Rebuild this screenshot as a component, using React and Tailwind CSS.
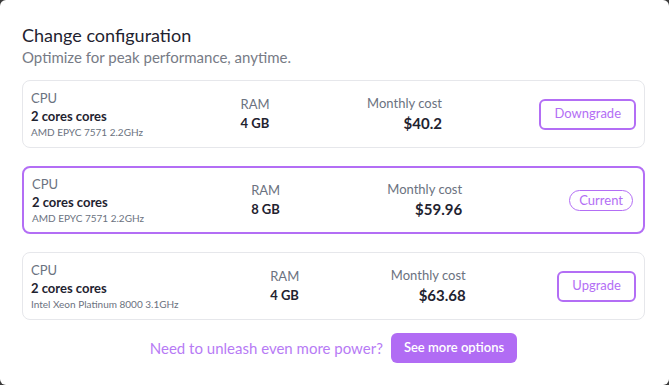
const plans = [
  {
    cpu: "2 cores cores",
    model: "AMD EPYC 7571 2.2GHz",
    ram: "4 GB",
    cost: "$40.2",
    action: "Downgrade",
  },
  {
    cpu: "2 cores cores",
    model: "AMD EPYC 7571 2.2GHz",
    ram: "8 GB",
    cost: "$59.96",
    action: "Current",
    current: true,
  },
  {
    cpu: "2 cores cores",
    model: "Intel Xeon Platinum 8000 3.1GHz",
    ram: "4 GB",
    cost: "$63.68",
    action: "Upgrade",
  },
];

function PlanRow({ plan }) {
  return (
    <div
      className={`flex items-center justify-between rounded-lg bg-white ${
        plan.current
          ? "border-2 border-[#b36ef5] px-[8px] py-[7px]"
          : "border border-[#e6e7eb] px-[8px] py-[8px]"
      }`}
    >
      {/* CPU */}
      <div className="flex flex-col">
        <span className="text-[13px] leading-[18px] text-[#6b7280]">CPU</span>
        <span className="text-[13px] leading-[18px] font-bold text-[#1f2330]">
          {plan.cpu}
        </span>
        <span className="text-[10px] leading-[14px] text-[#6b7280]">
          {plan.model}
        </span>
      </div>

      {/* RAM */}
      <div className="flex flex-col">
        <span className="text-[13px] leading-[18px] text-[#6b7280]">RAM</span>
        <span className="text-[13px] leading-[20px] font-bold text-[#1f2330]">
          {plan.ram}
        </span>
      </div>

      {/* Cost */}
      <div className="flex flex-col items-end">
        <span className="text-[13px] leading-[18px] text-[#6b7280]">
          Monthly cost
        </span>
        <span className="text-[15px] leading-[22px] font-bold text-[#1f2330]">
          {plan.cost}
        </span>
      </div>

      {plan.current ? (
        <span className="mr-[2px] rounded-full border border-[#b36ef5] px-[9px] text-[13px] leading-[19px] text-[#b36ef5]">
          {plan.action}
        </span>
      ) : (
        <button className="h-[31px] rounded-md border-2 border-[#b36ef5] px-[13px] text-[13px] text-[#b36ef5]">
          {plan.action}
        </button>
      )}
    </div>
  );
}

export default function App() {
  return (
    <div
      className="h-[385px] w-[669px] bg-[#3a3a3a]"
      style={{ fontFamily: "Lato, 'Noto Sans', sans-serif" }}
    >
      <div className="h-full w-full rounded-[6px] bg-white pl-[22px] pr-[24px] pt-[23px]">
        <h2 className="text-[18px] leading-[24px] font-normal text-[#1f2330]">
          Change configuration
        </h2>
        <p className="text-[15px] leading-[20px] text-[#777b86]">
          Optimize for peak performance, anytime.
        </p>

        <div className="mt-[13px] flex flex-col gap-[18px]">
          {plans.map((p, i) => (
            <PlanRow key={i} plan={p} />
          ))}
        </div>

        <div className="mt-[13px] flex items-center justify-center gap-2">
          <span className="text-[15px] text-[#b77bf5]">
            Need to unleash even more power?
          </span>
          <button className="h-[30px] rounded-md bg-[#b16cf4] px-[13px] text-[13px] font-semibold text-white">
            See more options
          </button>
        </div>
      </div>
    </div>
  );
}
